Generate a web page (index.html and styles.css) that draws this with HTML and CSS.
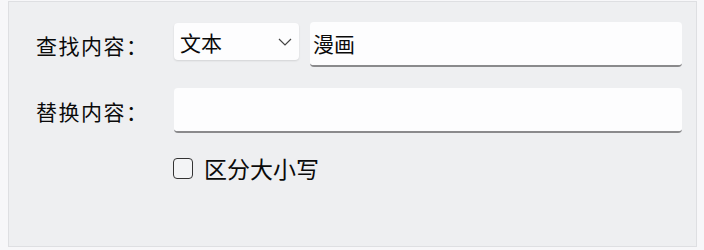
FILE: index.html
```html
<!DOCTYPE html>
<html lang="zh-CN">
<head>
    <meta charset="UTF-8">
    <title>查找替换</title>
    <link rel="stylesheet" href="styles.css">
</head>
<body>
    <div class="panel">
        <div class="form">
            <label class="label">查找内容：</label>
            <div class="row">
                <div class="select">
                    <span>文本</span>
                    <svg class="chevron" width="14" height="8" viewBox="0 0 14 8">
                        <path d="M1 1 L7 7 L13 1" fill="none" stroke="#444" stroke-width="1.2"/>
                    </svg>
                </div>
                <div class="input find">漫画</div>
            </div>

            <label class="label">替换内容：</label>
            <div class="input replace"></div>

            <div></div>
            <label class="check">
                <span class="box"></span>
                <span>区分大小写</span>
            </label>
        </div>
    </div>
</body>
</html>
```

FILE: styles.css
```css
* {
    margin: 0;
    padding: 0;
    box-sizing: border-box;
}

body {
    width: 704px;
    height: 250px;
    background: #f7f7f9;
    font-family: "Noto Sans CJK SC", "Noto Sans", sans-serif;
    color: #0a0a0a;
    padding: 1px 7px 3px 8px;
}

.panel {
    height: 246px;
    background: #eeeff1;
    border: 1px solid #dedfe2;
    padding: 20px 0 0 27px;
}

.form {
    display: grid;
    grid-template-columns: 138px 508px;
    row-gap: 21px;
    align-items: center;
}

.label {
    font-size: 21px;
    line-height: 30px;
    letter-spacing: 1.5px;
}

.row {
    display: flex;
    align-items: flex-start;
    gap: 11px;
}

.select {
    width: 125px;
    height: 37px;
    margin-top: 1px;
    background: #fdfdfe;
    border-radius: 4px;
    box-shadow: 0 1px 2px rgba(0, 0, 0, 0.12);
    display: flex;
    align-items: center;
    justify-content: space-between;
    padding: 0 7px 0 6px;
    font-size: 21px;
}

.input {
    height: 45px;
    background: #fdfdfe;
    border-radius: 4px;
    border-bottom: 2px solid #8a8a8c;
    font-size: 21px;
    line-height: 42px;
    padding: 0 3px;
}

.find {
    width: 372px;
}

.check {
    display: flex;
    align-items: center;
    gap: 11px;
    font-size: 23px;
    line-height: 30px;
    margin-top: -1px;
}

.box {
    width: 20px;
    height: 21px;
    margin-left: -1px;
    border: 1.5px solid #333;
    border-radius: 4px;
    background: #f3f4f6;
}
```
